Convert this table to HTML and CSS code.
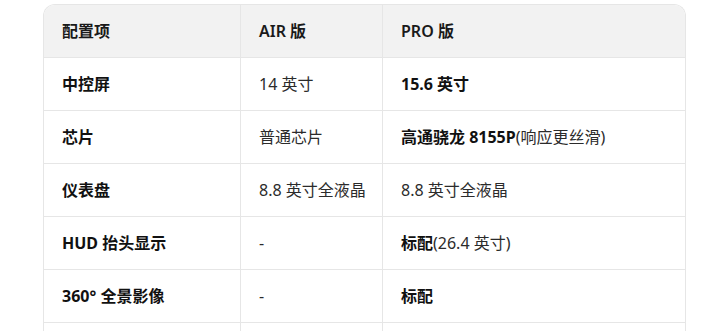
FILE: index.html
```html
<!DOCTYPE html>
<html lang="zh">
<head>
<meta charset="utf-8">
<link rel="stylesheet" href="styles.css">
</head>
<body>
<div class="wrap">
<table class="spec">
<thead>
<tr><th class="c1">配置项</th><th class="c2">AIR 版</th><th class="c3">PRO 版</th></tr>
</thead>
<tbody>
<tr><td class="key">中控屏</td><td>14 英寸</td><td><strong>15.6 英寸</strong></td></tr>
<tr><td class="key">芯片</td><td>普通芯片</td><td><strong>高通骁龙 8155P</strong>(响应更丝滑)</td></tr>
<tr><td class="key">仪表盘</td><td>8.8 英寸全液晶</td><td>8.8 英寸全液晶</td></tr>
<tr><td class="key">HUD 抬头显示</td><td>-</td><td><strong>标配</strong>(26.4 英寸)</td></tr>
<tr><td class="key">360° 全景影像</td><td>-</td><td><strong>标配</strong></td></tr>
<tr><td class="key">&nbsp;</td><td>&nbsp;</td><td>&nbsp;</td></tr>
</tbody>
</table>
</div>
</body>
</html>
```
FILE: styles.css
```css
html, body {
  margin: 0;
  padding: 0;
  background: #fff;
}
body {
  font-family: "Noto Sans", "Noto Sans CJK SC", sans-serif;
  font-size: 16px;
  color: #1f1f1f;
}
.wrap {
  padding: 4px 0 0 43px;
}
.spec {
  width: 643px;
  border-collapse: separate;
  border-spacing: 0;
  border: 1px solid #e6e6e6;
  border-bottom: none;
  border-radius: 12px 12px 0 0;
  overflow: hidden;
  table-layout: fixed;
}
.spec th, .spec td {
  text-align: left;
  padding: 14px 18px 14px 18px;
  line-height: 24px;
  border-bottom: 1px solid #e6e6e6;
  border-left: 1px solid #e6e6e6;
  white-space: nowrap;
}
.spec th:first-child, .spec td:first-child {
  border-left: none;
}
.spec thead th {
  background: #f2f2f2;
  font-weight: 600;
  color: #1a1a1a;
}
.c1 { width: 160px; }
.c2 { width: 105px; }
.spec td.key {
  font-weight: 700;
  color: #111;
}
.spec td {
  color: #2b2b2b;
}
.spec td strong {
  font-weight: 700;
  color: #111;
}
```
